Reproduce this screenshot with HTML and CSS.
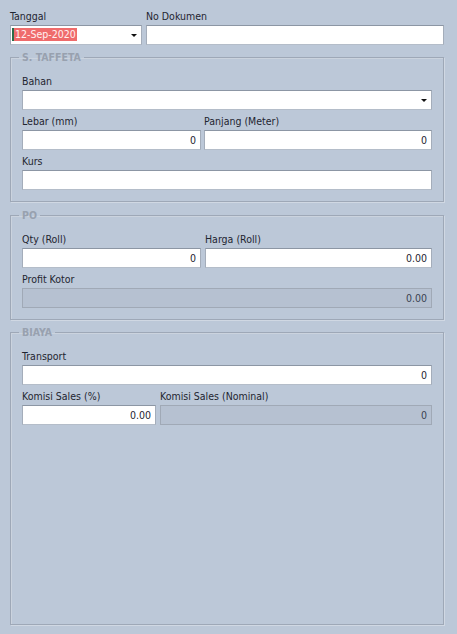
FILE: index.html
```html
<!DOCTYPE html>
<html>
<head>
<meta charset="utf-8">
<link rel="stylesheet" href="styles.css">
</head>
<body>
<div class="form">
  <div class="row top">
    <div class="field w-date">
      <div class="label">Tanggal</div>
      <div class="box combo date"><span class="sel"><span class="caret"></span>12-Sep-2020</span><span class="arrow"></span></div>
    </div>
    <div class="field w-doc">
      <div class="label">No Dokumen</div>
      <div class="box"></div>
    </div>
  </div>

  <fieldset class="group g1">
    <legend>S. TAFFETA</legend>
    <div class="stack">
      <div class="field">
        <div class="label">Bahan</div>
        <div class="box combo"><span class="arrow"></span></div>
      </div>
      <div class="row gap3">
        <div class="field w179">
          <div class="label">Lebar (mm)</div>
          <div class="box num">0</div>
        </div>
        <div class="field grow">
          <div class="label">Panjang (Meter)</div>
          <div class="box num">0</div>
        </div>
      </div>
      <div class="field">
        <div class="label">Kurs</div>
        <div class="box"></div>
      </div>
    </div>
  </fieldset>

  <fieldset class="group g2">
    <legend>PO</legend>
    <div class="stack">
      <div class="row gap4">
        <div class="field w179">
          <div class="label">Qty (Roll)</div>
          <div class="box num">0</div>
        </div>
        <div class="field grow">
          <div class="label">Harga (Roll)</div>
          <div class="box num">0.00</div>
        </div>
      </div>
      <div class="field">
        <div class="label">Profit Kotor</div>
        <div class="box num disabled">0.00</div>
      </div>
    </div>
  </fieldset>

  <fieldset class="group g3">
    <legend>BIAYA</legend>
    <div class="stack">
      <div class="field">
        <div class="label">Transport</div>
        <div class="box num">0</div>
      </div>
      <div class="row gap4">
        <div class="field w134">
          <div class="label">Komisi Sales (%)</div>
          <div class="box num">0.00</div>
        </div>
        <div class="field grow">
          <div class="label">Komisi Sales (Nominal)</div>
          <div class="box num disabled">0</div>
        </div>
      </div>
    </div>
  </fieldset>
</div>
</body>
</html>
```

FILE: styles.css
```css
html, body {
  margin: 0;
  padding: 0;
}
body {
  background: #bcc8d8;
  font-family: "DejaVu Sans Condensed", "DejaVu Sans", sans-serif;
  font-size: 10.5px;
  color: #1f2530;
  width: 457px;
  height: 634px;
  overflow: hidden;
}
.form {
  box-sizing: border-box;
  height: 634px;
  padding: 9px 13px 9px 10px;
  display: flex;
  flex-direction: column;
}
.row {
  display: flex;
}
.row.top { gap: 4px; }
.row.gap3 { gap: 3px; }
.row.gap4 { gap: 4px; }
.w-date { width: 132px; flex: none; }
.w-doc { width: 298px; flex: none; }
.w179 { width: 179px; flex: none; }
.w134 { width: 134px; flex: none; }
.grow { flex: 1; min-width: 0; }

.label {
  height: 14px;
  line-height: 14px;
  margin-bottom: 2px;
  white-space: nowrap;
}
.box {
  box-sizing: border-box;
  height: 20px;
  background: #ffffff;
  border: 1px solid #a4adba;
  border-top-color: #8c96a4;
  border-bottom-color: #b4bdc9;
  line-height: 18px;
  position: relative;
  white-space: nowrap;
}
.box.num {
  text-align: right;
  padding-right: 4px;
}
.box.disabled {
  background: #b6c1d1;
  border-color: #a0a9b6;
  color: #3a4351;
}
.arrow {
  position: absolute;
  right: 4px;
  top: 8px;
  width: 0;
  height: 0;
  border-left: 3px solid transparent;
  border-right: 3px solid transparent;
  border-top: 3px solid #111;
}
.sel {
  display: inline-block;
  margin: 2px 0 0 1px;
  height: 13px;
  line-height: 13px;
  background: #ef6b6b;
  color: #fff0f0;
  padding: 0 1px 0 0;
  vertical-align: top;
}
.caret {
  display: inline-block;
  width: 2px;
  height: 13px;
  background: #2b6b4a;
  vertical-align: top;
  margin-right: 1px;
}

.group {
  margin: 0;
  border: 1px solid #9ea8b7;
  box-shadow: 1px 1px 0 #d0d8e3, inset 1px 1px 0 #cbd3de;
  padding: 10px 11px 11px 11px;
  min-width: 0;
}
.group legend {
  font-weight: bold;
  color: #98a1af;
  line-height: 13px;
  padding: 0 3px;
  margin-left: -3px;
}
.g1 { margin-top: 6px; }
.g2 { margin-top: 7px; }
.g3 { margin-top: 6px; flex: 1; }
.stack {
  display: flex;
  flex-direction: column;
  gap: 4px;
}
```
